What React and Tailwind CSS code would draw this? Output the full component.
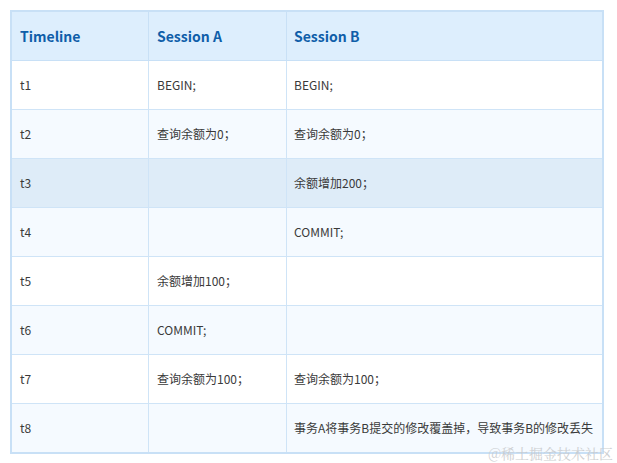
import React from 'react';

const rows = [
  { t: 't1', a: 'BEGIN;', b: 'BEGIN;' },
  { t: 't2', a: '查询余额为0；', b: '查询余额为0；' },
  { t: 't3', a: '', b: '余额增加200；', hover: true },
  { t: 't4', a: '', b: 'COMMIT;' },
  { t: 't5', a: '余额增加100；', b: '' },
  { t: 't6', a: 'COMMIT;', b: '' },
  { t: 't7', a: '查询余额为100；', b: '查询余额为100；' },
  { t: 't8', a: '', b: '事务A将事务B提交的修改覆盖掉，导致事务B的修改丢失' },
];

export default function App() {
  return (
    <div
      className="relative w-[617px] h-[463px] bg-white"
      style={{ fontFamily: '"Noto Sans CJK SC", "Noto Sans", sans-serif' }}
    >
      <div className="absolute left-[10px] top-[10px] w-[594px] border-2 border-[#c8e0f6]">
        {/* header */}
        <div className="grid grid-cols-[137px_138px_1fr] h-[49px] bg-[#ddeefd] border-b border-[#c8e0f6]">
          <div className="flex items-center pl-[8px] border-r border-[#c8e0f6] text-[14px] font-bold text-[#0f5ea9]">Timeline</div>
          <div className="flex items-center pl-[8px] border-r border-[#c8e0f6] text-[14px] font-bold text-[#0f5ea9]">Session A</div>
          <div className="flex items-center pl-[7px] text-[14px] font-bold text-[#0f5ea9]">Session B</div>
        </div>
        {rows.map((r, i) => {
          const bg = r.hover ? 'bg-[#deecf8]' : i % 2 === 1 ? 'bg-[#f5faff]' : 'bg-white';
          const last = i === rows.length - 1;
          return (
            <div
              key={r.t}
              className={`grid grid-cols-[137px_138px_1fr] ${last ? 'h-[48px]' : 'h-[49px] border-b border-[#cfe4f7]'} ${bg}`}
            >
              <div className="flex items-center pl-[8px] border-r border-[#cfe4f7] text-[12px] text-[#3a3a3a]">{r.t}</div>
              <div className="flex items-center pl-[8px] border-r border-[#cfe4f7] text-[12px] text-[#3a3a3a]">{r.a}</div>
              <div className="flex items-center pl-[7px] text-[12px] text-[#3a3a3a]">{r.b}</div>
            </div>
          );
        })}
      </div>
      {/* watermark */}
      <div className="absolute right-[4px] top-[444px] text-[14px] leading-[18px] text-[#c9cbce] opacity-90 font-['Noto_Serif_CJK_SC','Noto_Sans_CJK_SC',serif]">
        @稀土掘金技术社区
      </div>
    </div>
  );
}
